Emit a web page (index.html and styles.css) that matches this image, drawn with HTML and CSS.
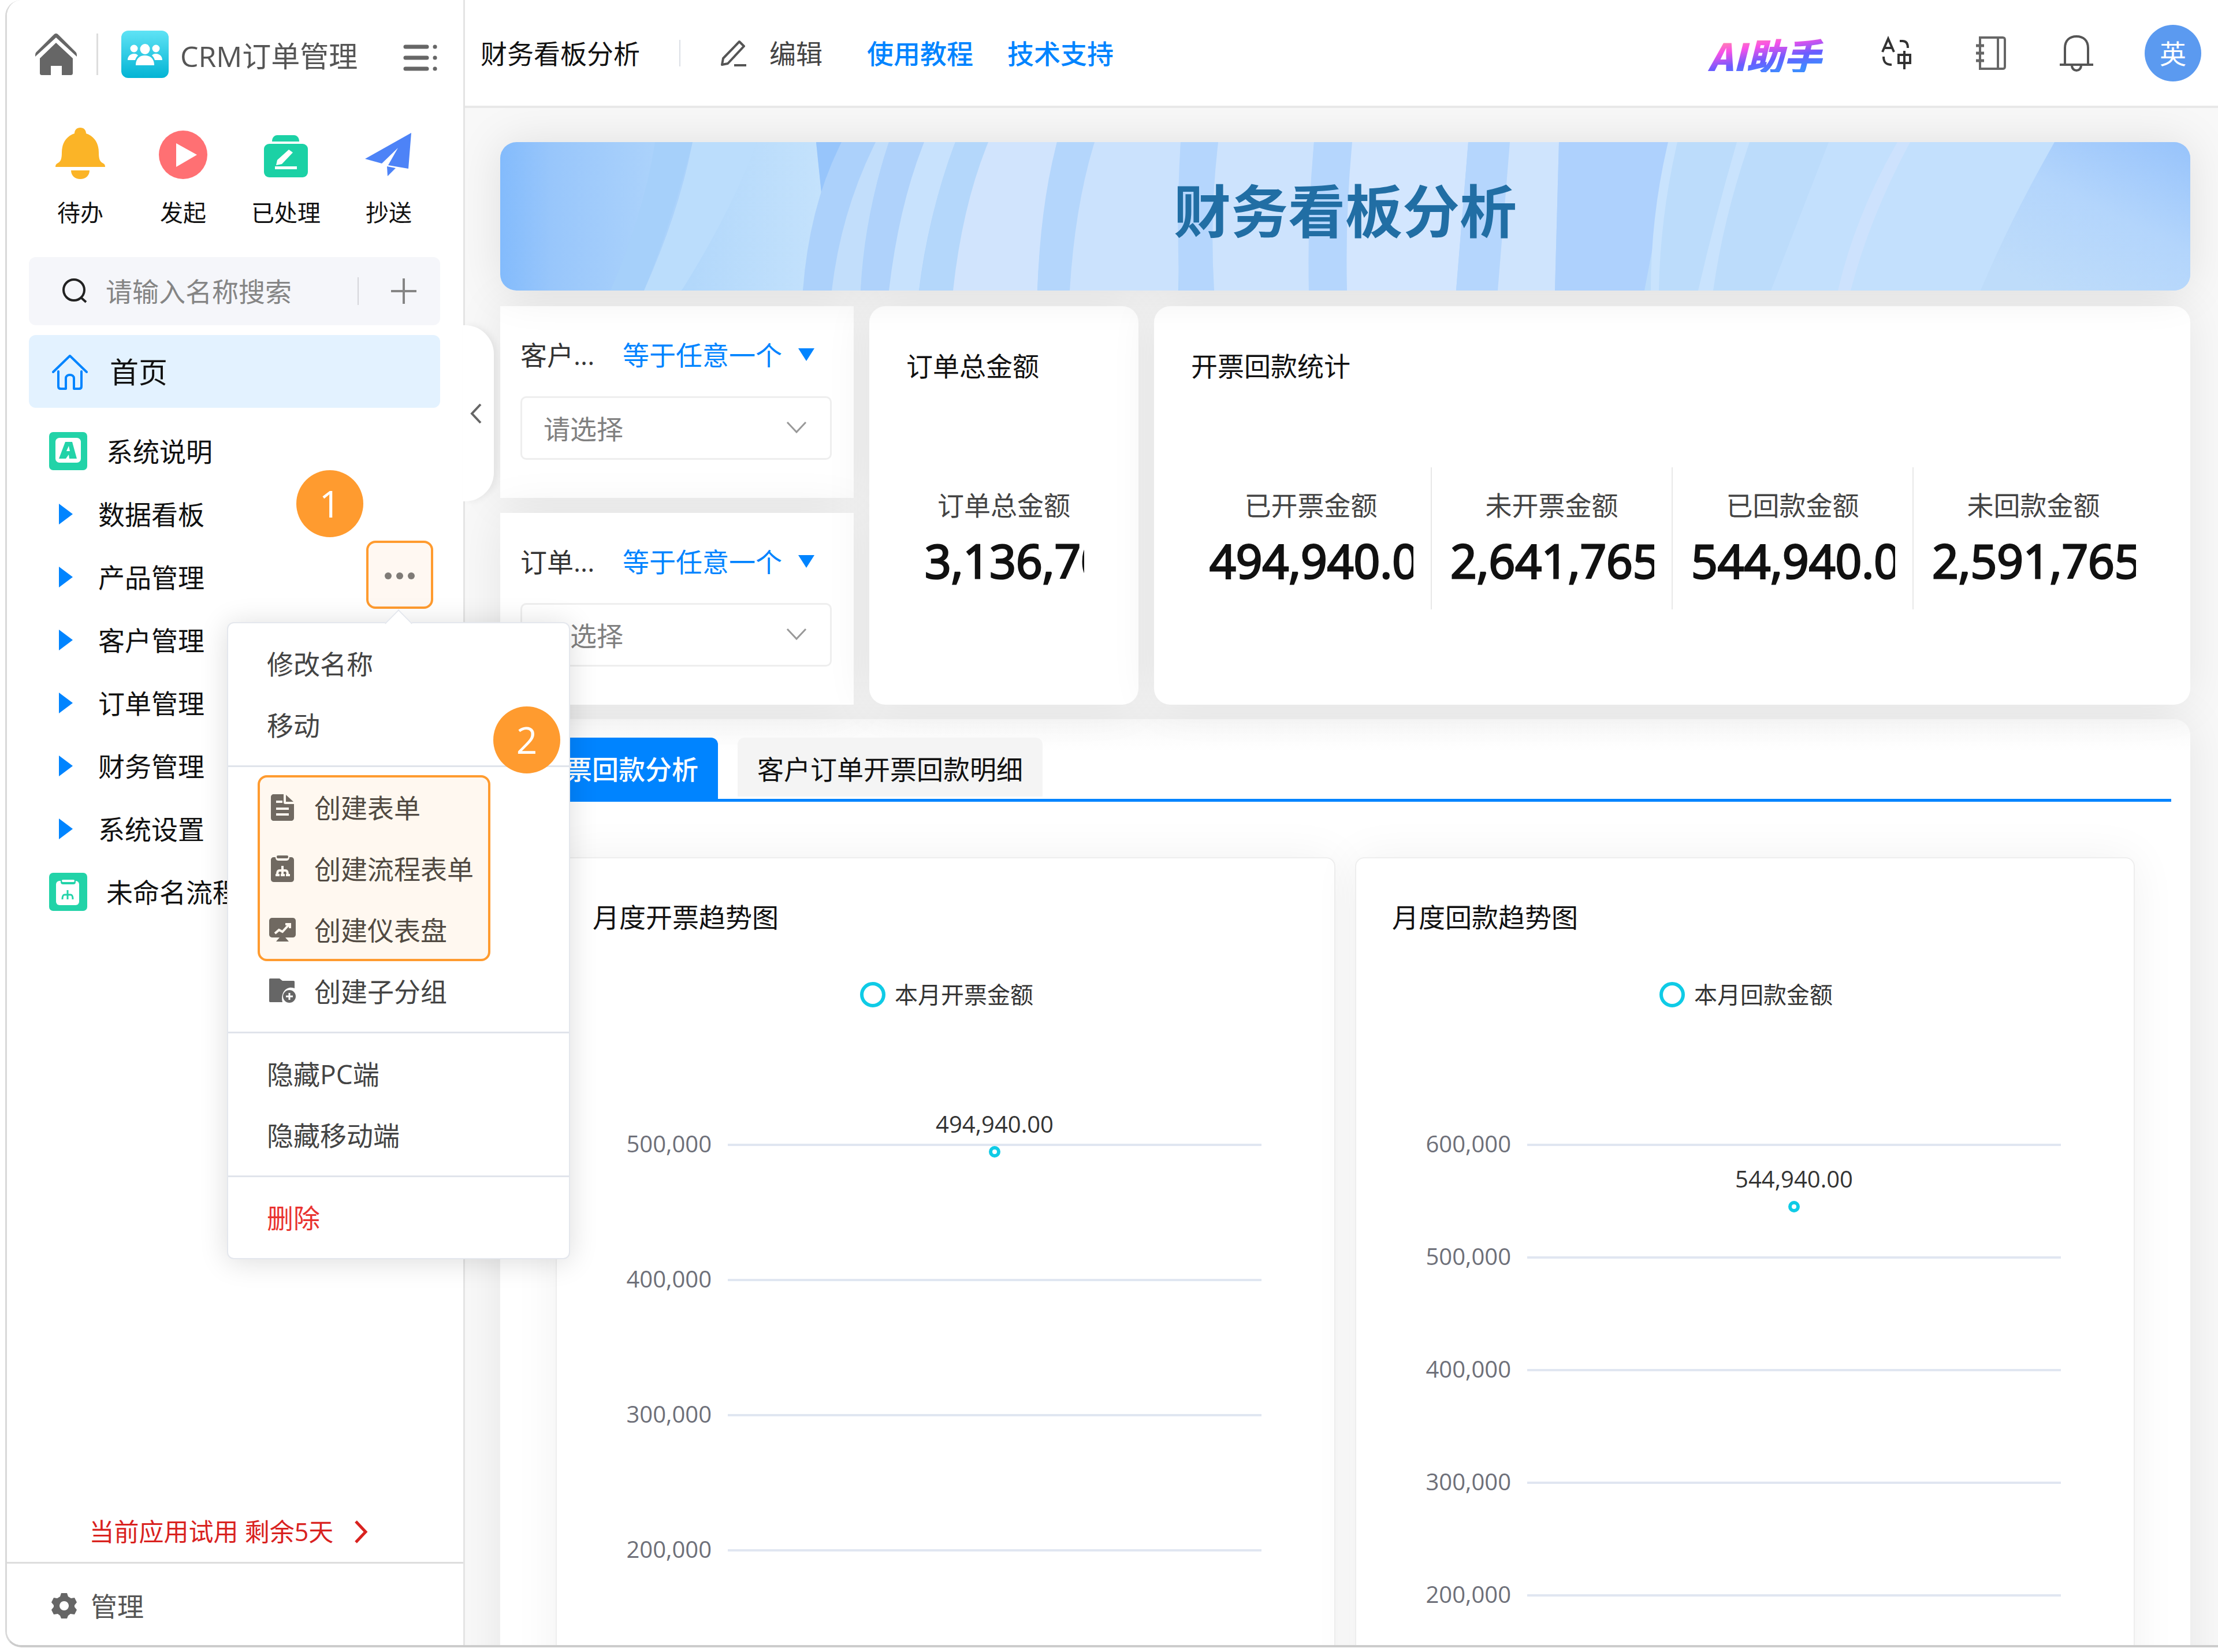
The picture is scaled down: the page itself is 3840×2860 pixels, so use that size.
FILE: index.html
```
<!DOCTYPE html>
<html lang="zh-CN">
<head>
    <meta charset="UTF-8">
    <title>CRM订单管理</title>
    <link rel="stylesheet" href="styles.css">
</head>
<body>
    <div class="app">
        <aside class="sidebar">
            <div class="side-head">
                <a class="home-link" href="#" aria-label="主页">
                    <svg width="72" height="74" viewBox="0 0 72 74" fill="#666">
                        <path d="M36 1c2 0 3 1 5 3l29 29c2 2 2 4 2 8L36 8 0 41c0-4 0-6 2-8L31 4c2-2 3-3 5-3z"/>
                        <path d="M36 17l29 27v25c0 3-1 4-4 4H46V57H27v16H12c-3 0-4-1-4-4V44z"/>
                    </svg>
                </a>
                <span class="side-divider"></span>
                <svg class="app-logo" width="82" height="82" viewBox="0 0 82 82">
                    <defs>
                        <linearGradient id="logo" x1="0" y1="0" x2="0" y2="1">
                            <stop offset="0" stop-color="#5fe3f5"/>
                            <stop offset="1" stop-color="#03b4d4"/>
                        </linearGradient>
                    </defs>
                    <rect width="82" height="82" rx="12" fill="url(#logo)"/>
                    <g fill="#fff">
                        <circle cx="22" cy="31" r="6.500"/>
                        <circle cx="60" cy="31" r="6.500"/>
                        <ellipse cx="41" cy="32" rx="8.500" ry="9"/>
                        <path d="M11 51c0-6 4-11 11-11 4 0 5 1 7 3-3 3-4 5-5 8z"/>
                        <path d="M71 51c0-6-4-11-11-11-4 0-5 1-7 3 3 3 4 5 5 8z"/>
                        <path d="M25 60c0-11 6-17 16-17s16 6 16 17z"/>
                    </g>
                </svg>
                <span class="app-name">CRM订单管理</span>
                <button class="icon-button menu-toggle" aria-label="菜单">
                    <svg width="60" height="46" viewBox="0 0 60 46" stroke="#666" stroke-width="7" stroke-linecap="round">
                        <path d="M4 4h37M4 23h37M4 42h37M55 4h.1M55 23h.1M55 42h.1"/>
                    </svg>
                </button>
            </div>

            <nav class="quick">
                <a href="#">
                    <svg width="90" height="90" viewBox="0 0 90 90" fill="#fbb427">
                        <path d="M45 1c6 0 10 4 10 10 15 5 22 18 22 33 0 12 2 16 8 19 2 1 3 3 3 6H2c0-3 1-5 3-6 6-3 8-7 8-19 0-15 7-28 22-33 0-6 4-10 10-10zM29 75h32c0 9-7 15-16 15s-16-6-16-15z"/>
                    </svg>
                    待办
                </a>
                <a href="#">
                    <svg width="90" height="90" viewBox="0 0 90 90">
                        <circle cx="45" cy="48" r="42" fill="#ff7073"/>
                        <path d="M33 28l36 20-36 21z" fill="#fff"/>
                    </svg>
                    发起
                </a>
                <a href="#">
                    <svg width="90" height="90" viewBox="0 0 90 90">
                        <path d="M21 25c0-7 4-11 9-11h29c5 0 9 4 9 11z" fill="#1bd1a5"/>
                        <rect x="7" y="29" width="76" height="58" rx="9" fill="#1bd1a5"/>
                        <path d="M50 39l7 5-19 20-10 2 2-9zM26 68h38v5H26z" fill="#fff"/>
                    </svg>
                    已处理
                </a>
                <a href="#">
                    <svg width="90" height="90" viewBox="0 0 90 90" fill="#4d83f7">
                        <path d="M84 10L4 55l29 8 28-27-17 30 35 6z"/>
                        <path d="M42 68l15 3-14 14z"/>
                    </svg>
                    抄送
                </a>
            </nav>

            <div class="search">
                <svg width="44" height="44" viewBox="0 0 44 44" fill="none" stroke="#222" stroke-width="4">
                    <circle cx="21" cy="20" r="18"/>
                    <path d="M33 33l9 8"/>
                </svg>
                <input type="text" placeholder="请输入名称搜索" aria-label="请输入名称搜索">
                <span class="search-divider"></span>
                <button class="icon-button" aria-label="新增">
                    <svg width="44" height="44" viewBox="0 0 44 44" stroke="#858585" stroke-width="4">
                        <path d="M0 22h44M22 0v44"/>
                    </svg>
                </button>
            </div>

            <a class="home-row" href="#">
                <svg width="62" height="62" viewBox="0 0 62 62" fill="none" stroke="#0084ff" stroke-width="4" stroke-linecap="round" stroke-linejoin="round">
                    <path d="M2 31L31 3l29 28M11 30v26c0 2 1 4 4 4h9V42c0-4 3-6 7-6s7 2 7 6v18h9c3 0 4-2 4-4V30"/>
                </svg>
                首页
            </a>

            <ul class="tree">
                <li class="tree-row leaf">
                    <svg width="66" height="66" viewBox="0 0 66 66">
                        <rect width="66" height="66" rx="7" fill="#22d3a8"/>
                        <rect x="11" y="10" width="44" height="43" rx="7" fill="#fff"/>
                        <path d="M28 17h12l8 29H35l-1-7-5 7H17z" fill="#22d3a8"/>
                        <path d="M34 24l2 9h-6z" fill="#fff"/>
                    </svg>
                    系统说明
                </li>
                <li class="tree-row"><span class="arrow"></span>数据看板</li>
                <li class="tree-row">
                    <span class="arrow"></span>产品管理
                    <button class="more" aria-label="更多"><i></i><i></i><i></i></button>
                    <div class="menu">
                        <div class="menu-group">
                            <button>修改名称</button>
                            <button>移动</button>
                        </div>
                        <div class="menu-group create">
                            <button>
                                <svg width="46" height="46" viewBox="0 0 46 46" fill="#666">
                                    <path d="M8 0h17v14c0 2 1 3 3 3h15v24c0 3-2 5-5 5H8c-3 0-5-2-5-5V5c0-3 2-5 5-5z"/>
                                    <path d="M29 1l13 12H29z"/>
                                    <path d="M12 13h11M12 25h22M12 35h22" stroke="#fff" stroke-width="4"/>
                                </svg>
                                创建表单
                            </button>
                            <button>
                                <svg width="46" height="46" viewBox="0 0 46 46" fill="#666">
                                    <path d="M8 3h3c0 5 3 6 6 6h12c3 0 6-1 6-6h3c3 0 5 2 5 5v33c0 3-2 5-5 5H8c-3 0-5-2-5-5V8c0-3 2-5 5-5z"/>
                                    <rect x="13" y="0" width="20" height="5" rx="2"/>
                                    <path d="M23 18v17M23 26h-5c-3 0-4 2-4 9M23 26h5c3 0 4 2 4 9" fill="none" stroke="#fff" stroke-width="4"/>
                                    <path d="M11 32h7v4h-7zM20 32h7v4h-7zM29 32h7v4h-7z" fill="#fff"/>
                                </svg>
                                创建流程表单
                            </button>
                            <button>
                                <svg width="46" height="46" viewBox="0 0 46 46" fill="#666">
                                    <rect x="0" y="2" width="46" height="34" rx="5"/>
                                    <path d="M18 36h10l6 7H12z"/>
                                    <path d="M10 29l7-6 6 3 12-13M28 13h8v7" fill="none" stroke="#fff" stroke-width="4"/>
                                </svg>
                                创建仪表盘
                            </button>
                            <button>
                                <svg width="46" height="46" viewBox="0 0 46 46" fill="#666">
                                    <path d="M2 1h16l5 4h19c2 0 2 1 2 3v10c-12-5-25 5-21 24H2c-2 0-2-1-2-3V4c0-2 0-3 2-3z"/>
                                    <circle cx="35" cy="32" r="11"/>
                                    <path d="M29 32h12M35 26v12" stroke="#fff" stroke-width="3"/>
                                </svg>
                                创建子分组
                            </button>
                        </div>
                        <div class="menu-group">
                            <button>隐藏PC端</button>
                            <button>隐藏移动端</button>
                        </div>
                        <div class="menu-group">
                            <button class="danger">删除</button>
                        </div>
                        <span class="mark mark-two">2</span>
                    </div>
                    <span class="mark mark-one">1</span>
                </li>
                <li class="tree-row"><span class="arrow"></span>客户管理</li>
                <li class="tree-row"><span class="arrow"></span>订单管理</li>
                <li class="tree-row"><span class="arrow"></span>财务管理</li>
                <li class="tree-row"><span class="arrow"></span>系统设置</li>
                <li class="tree-row leaf">
                    <svg width="66" height="66" viewBox="0 0 66 66">
                        <rect width="66" height="66" rx="7" fill="#22d3a8"/>
                        <rect x="12" y="14" width="40" height="42" rx="6" fill="#fff"/>
                        <path d="M20 12h26v4c0 3-2 4-4 4H24c-2 0-4-1-4-4z" fill="#22d3a8"/>
                        <rect x="22" y="12" width="22" height="4" rx="2" fill="#fff"/>
                        <path d="M32 30v16M32 38h-5c-3 0-4 2-4 8M32 38h5c3 0 4 2 4 8" fill="none" stroke="#22d3a8" stroke-width="3"/>
                    </svg>
                    未命名流程
                </li>
            </ul>

            <a class="trial" href="#">
                当前应用试用 剩余5天
                <svg width="24" height="40" viewBox="0 0 24 40" fill="none" stroke="#d9221f" stroke-width="5">
                    <path d="M3 2l17 18L3 38"/>
                </svg>
            </a>
            <a class="manage" href="#">
                <svg width="44" height="44" viewBox="0 0 44 44" fill="#666">
                    <path fill-rule="evenodd" d="M17 0h10l2 6 5 3 6-1 4 8-4 5v3l4 5-4 8-7-1-4 3-2 5H17l-2-5-4-3-7 1-4-8 4-5v-3l-4-5 4-8 6 1 5-3zM22 14a8 8 0 1 0 .1 0z"/>
                </svg>
                管理
            </a>
            <button class="collapse" aria-label="收起">
                <svg width="20" height="36" viewBox="0 0 20 36" fill="none" stroke="#666" stroke-width="4">
                    <path d="M18 2L3 18l15 16"/>
                </svg>
            </button>
        </aside>

        <main class="main">
            <header class="topbar">
                <h1 class="page-name">财务看板分析</h1>
                <span class="top-divider"></span>
                <button class="edit">
                    <svg width="46" height="46" viewBox="0 0 46 46" fill="none" stroke="#555" stroke-width="4" stroke-linejoin="round">
                        <path d="M33 3l8 8-28 30-10 2 2-11zM24 44h21"/>
                    </svg>
                    编辑
                </button>
                <a class="top-link" href="#">使用教程</a>
                <a class="top-link" href="#">技术支持</a>
                <div class="top-right">
                    <a class="ai" href="#">AI助手</a>
                    <button class="icon-button translate" aria-label="语言">
                        <svg width="60" height="60" viewBox="0 0 60 60" fill="none" stroke="#333" stroke-width="4">
                            <path d="M4 28L14 5l10 23M8 21h12M34 9h5c6 0 9 4 9 12M6 36c0 10 4 14 14 14M32 33h20v14H32zM42 26v32"/>
                        </svg>
                    </button>
                    <button class="icon-button" aria-label="笔记">
                        <svg width="60" height="60" viewBox="0 0 60 60" fill="none" stroke="#666" stroke-width="4">
                            <path d="M11 3h39c3 0 4 1 4 4v46c0 3-1 4-4 4H11zM42 3v54"/>
                            <path d="M4 17h14M4 30h14M4 43h14" stroke-width="5"/>
                        </svg>
                    </button>
                    <button class="icon-button" aria-label="通知">
                        <svg width="60" height="64" viewBox="0 0 60 64" fill="none" stroke="#555" stroke-width="4">
                            <path d="M10 51V23C10 10 18 3 30 3s20 7 20 20v28M1 52h58M22 53c0 12 16 12 16 0"/>
                        </svg>
                    </button>
                    <span class="avatar">英</span>
                </div>
            </header>

            <div class="board">
                <section class="banner">
                    <svg class="banner-bg" viewBox="0 0 2926 257" preserveAspectRatio="none">
                        <defs>
                            <linearGradient id="base">
                                <stop offset="0" stop-color="#83bbfc"/>
                                <stop offset=".03" stop-color="#98c6fb"/>
                                <stop offset=".09" stop-color="#abd2fb"/>
                                <stop offset="1" stop-color="#b5d7fb"/>
                            </linearGradient>
                            <linearGradient id="fold">
                                <stop offset="0" stop-color="#b1d7fb"/>
                                <stop offset="1" stop-color="#c4e2fc"/>
                            </linearGradient>
                            <linearGradient id="end" x1="1" y1="0" x2=".3" y2="1">
                                <stop offset="0" stop-color="#97c3fb"/>
                                <stop offset=".5" stop-color="#b3d5fc"/>
                                <stop offset="1" stop-color="#bedcfa"/>
                            </linearGradient>
                        </defs>
                        <path fill="url(#base)" d="M0 0h2926v257H0z"/>
                        <path fill="#a6d0fa" d="M268 0h65Q300 130 249 257h-58Q250 120 268 0z"/>
                        <path fill="#bbddfc" d="M333 0h111Q400 150 314 257h-65Q310 120 333 0z"/>
                        <path fill="url(#fold)" d="M444 0h103l9 85-32 172H314Q400 120 444 0z"/>
                        <path fill="#97c5fb" d="M547 0h44l-35 88z"/>
                        <path fill="#acd1fb" d="M591 0h59Q590 130 574 257h-50Q535 110 591 0z"/>
                        <path fill="#c2defb" d="M650 0h23Q630 130 624 257h-50Q590 120 650 0z"/>
                        <path fill="#afd2fb" d="M673 0h61Q685 130 673 257h-49Q635 110 673 0z"/>
                        <path fill="#c8e2fd" d="M734 0h54Q740 130 725 257h-52Q690 110 734 0z"/>
                        <path fill="#b4d7fb" d="M788 0h57Q800 130 784 257h-59Q745 110 788 0z"/>
                        <path fill="#d1e4fd" d="M845 0h119Q935 130 930 257H784Q800 110 845 0z"/>
                        <path fill="#b4d6fc" d="M964 0h65Q995 130 986 257h-56Q935 110 964 0z"/>
                        <path fill="#cbe2fd" d="M1029 0h149l-4 257H986Q995 110 1029 0z"/>
                        <path fill="#b5d6fd" d="M1178 0h65q-15 130-7 257h-60q-6-130 2-257z"/>
                        <path fill="#cde3fd" d="M1243 0h166q-10 130-9 257h-164q-8-130 7-257z"/>
                        <path fill="#b5d6fd" d="M1409 0h66q-12 130-9 257h-66q-3-130 9-257z"/>
                        <path fill="#d3e6fe" d="M1475 0h201l-21 257h-189q-3-130 9-257z"/>
                        <path fill="#b5d6fd" d="M1676 0h72l-21 257h-72z"/>
                        <path fill="#cfe4fd" d="M1748 0h85l-7 257h-99z"/>
                        <path fill="#aed1fd" d="M1833 0h205l-57 257h-155z"/>
                        <path fill="#bcdcfb" d="M2030 0h300l-60 257h-289z"/>
                        <path fill="#c3e0fd" d="M2300 0h391l-128 257h-363z"/>
                        <path fill="#c9e3fd" d="M2022 0h16q-30 130-32 257h-14q0-130 30-257zM2141 0h22q-45 130-63 257h-26q30-130 67-257z"/>
                        <path fill="#cde2fd" d="M2419 0h22q-70 130-103 257h-22q30-130 103-257z"/>
                        <path fill="url(#end)" d="M2691 0h235v257h-363q50-120 128-257z"/>
                    </svg>
                    <h2>财务看板分析</h2>
                </section>

                <div class="cards">
                    <div class="filters">
                        <div class="filter">
                            <div class="filter-head">
                                <label for="customer">客户...</label>
                                <button class="operator">等于任意一个<span class="caret"></span></button>
                            </div>
                            <div class="select">
                                <select id="customer"><option>请选择</option></select>
                                <svg width="36" height="22" viewBox="0 0 36 22" fill="none" stroke="#999" stroke-width="3"><path d="M2 2l16 17L34 2"/></svg>
                            </div>
                        </div>
                        <div class="filter">
                            <div class="filter-head">
                                <label for="order">订单...</label>
                                <button class="operator">等于任意一个<span class="caret"></span></button>
                            </div>
                            <div class="select">
                                <select id="order"><option>请选择</option></select>
                                <svg width="36" height="22" viewBox="0 0 36 22" fill="none" stroke="#999" stroke-width="3"><path d="M2 2l16 17L34 2"/></svg>
                            </div>
                        </div>
                    </div>
                    <section class="card">
                        <h3>订单总金额</h3>
                        <div class="stats">
                            <div class="stat">
                                <div class="stat-label">订单总金额</div>
                                <div class="stat-value">3,136,705.00</div>
                            </div>
                        </div>
                    </section>
                    <section class="card">
                        <h3>开票回款统计</h3>
                        <div class="stats">
                            <div class="stat">
                                <div class="stat-label">已开票金额</div>
                                <div class="stat-value">494,940.00</div>
                            </div>
                            <div class="stat">
                                <div class="stat-label">未开票金额</div>
                                <div class="stat-value">2,641,765.00</div>
                            </div>
                            <div class="stat">
                                <div class="stat-label">已回款金额</div>
                                <div class="stat-value">544,940.00</div>
                            </div>
                            <div class="stat">
                                <div class="stat-label">未回款金额</div>
                                <div class="stat-value">2,591,765.00</div>
                            </div>
                        </div>
                    </section>
                </div>

                <section class="tab-card">
                    <div class="tabs">
                        <button class="tab active">开票回款分析</button>
                        <button class="tab">客户订单开票回款明细</button>
                    </div>
                    <div class="panels">
                        <section class="panel">
                            <h3>月度开票趋势图</h3>
                            <div class="legend"><span class="ring"></span>本月开票金额</div>
                            <div class="chart">
                                <div class="axis-row">
                                    <span>500,000</span>
                                    <div class="line">
                                        <div class="point" style="top: 12px"><b>494,940.00</b></div>
                                    </div>
                                </div>
                                <div class="axis-row"><span>400,000</span><div class="line"></div></div>
                                <div class="axis-row"><span>300,000</span><div class="line"></div></div>
                                <div class="axis-row"><span>200,000</span><div class="line"></div></div>
                            </div>
                        </section>
                        <section class="panel">
                            <h3>月度回款趋势图</h3>
                            <div class="legend"><span class="ring"></span>本月回款金额</div>
                            <div class="chart dense">
                                <div class="axis-row">
                                    <span>600,000</span>
                                    <div class="line">
                                        <div class="point" style="top: 107px"><b>544,940.00</b></div>
                                    </div>
                                </div>
                                <div class="axis-row"><span>500,000</span><div class="line"></div></div>
                                <div class="axis-row"><span>400,000</span><div class="line"></div></div>
                                <div class="axis-row"><span>300,000</span><div class="line"></div></div>
                                <div class="axis-row"><span>200,000</span><div class="line"></div></div>
                            </div>
                        </section>
                    </div>
                </section>
            </div>
        </main>
    </div>
</body>
</html>
```
FILE: styles.css
```
* {
    box-sizing: border-box;
}
body {
    margin: 0;
    background: #fff;
    color: #111;
    font-family: "Open Sans", "Noto Sans CJK SC", sans-serif;
    font-size: 46px;
    line-height: 60px;
}
button, input, select {
    font: inherit;
    color: inherit;
    border: none;
    background: none;
    padding: 0;
    margin: 0;
}
button {
    cursor: pointer;
}
a {
    color: inherit;
    text-decoration: none;
}
h1, h2, h3, ul {
    margin: 0;
    padding: 0;
    font-size: inherit;
    font-weight: normal;
}
svg {
    display: block;
    flex: none;
}
.icon-button {
    display: flex;
    justify-content: center;
    align-items: center;
}
.app {
    display: flex;
    height: calc(100vh - 8px);
    margin-left: 9px;
    border-left: 3px solid #d9d9d9;
    border-bottom: 4px solid #ccc;
    border-radius: 28px 0 0 28px;
    overflow: hidden;
}

/* sidebar */
.sidebar {
    position: relative;
    z-index: 2;
    flex: none;
    display: flex;
    flex-direction: column;
    width: 793px;
    padding: 0 40px 0 38px;
    border-right: 3px solid #e4e4e4;
    background: #fff;
}
.side-head {
    display: flex;
    align-items: center;
    height: 188px;
    padding: 0 4px 0 11px;
}
.side-divider {
    width: 3px;
    height: 72px;
    margin: 0 40px 0 34px;
    background: #ddd;
}
.app-name {
    margin-left: 20px;
    padding-top: 6px;
    font-size: 50px;
    color: #555;
}
.menu-toggle {
    margin-left: auto;
    padding-top: 12px;
}
.quick {
    display: grid;
    grid-template-columns: repeat(4, 1fr);
    padding-top: 32px;
    font-size: 40px;
}
.quick a {
    display: flex;
    flex-direction: column;
    align-items: center;
    gap: 28px;
}
.search {
    display: flex;
    align-items: center;
    height: 118px;
    margin-top: 47px;
    padding: 0 41px 0 57px;
    border-radius: 12px;
    background: #f5f6fa;
}
.search input {
    flex: 1;
    min-width: 0;
    margin-left: 32px;
    outline: none;
}
.search input::placeholder {
    color: #858585;
    opacity: 1;
}
.search-divider {
    width: 2px;
    height: 48px;
    margin-right: 56px;
    background: #d5d5da;
}
.home-row {
    display: flex;
    align-items: center;
    gap: 38px;
    height: 126px;
    margin-top: 17px;
    padding: 2px 0 0 40px;
    border-radius: 12px;
    background: #e3f2ff;
    font-size: 50px;
}
.tree {
    flex: 1;
    margin-top: 20px;
    list-style: none;
}
.tree-row {
    position: relative;
    display: flex;
    align-items: center;
    height: 109px;
    padding-left: 52px;
    white-space: nowrap;
}
.tree-row.leaf {
    gap: 33px;
    padding-left: 35px;
}
.arrow {
    margin-right: 44px;
    border-left: 24px solid #0084ff;
    border-top: 18px solid transparent;
    border-bottom: 18px solid transparent;
}
.more {
    position: absolute;
    top: -8px;
    right: 12px;
    display: flex;
    justify-content: center;
    align-items: center;
    gap: 8px;
    width: 116px;
    height: 118px;
    padding-top: 4px;
    border: 4px solid #ff9b2f;
    border-radius: 16px;
    background: #fff8f2;
}
.more i {
    width: 12px;
    height: 12px;
    border-radius: 50%;
    background: #7f7b77;
}
.trial {
    display: flex;
    justify-content: center;
    align-items: center;
    gap: 36px;
    height: 104px;
    padding-right: 20px;
    font-size: 43px;
    color: #d9221f;
}
.manage {
    display: flex;
    align-items: center;
    gap: 24px;
    height: 144px;
    margin: 0 -40px 0 -38px;
    padding: 4px 0 0 77px;
    border-top: 3px solid #ddd;
    color: #555;
}
.collapse {
    position: absolute;
    top: 563px;
    left: 100%;
    display: flex;
    align-items: center;
    width: 53px;
    height: 305px;
    padding-left: 12px;
    border-radius: 0 50px 50px 0;
    background: #fff;
    box-shadow: 6px 0 12px rgba(0, 0, 0, .06);
}

/* popup menu */
.menu {
    position: absolute;
    z-index: 5;
    top: 133px;
    left: 343px;
    width: 594px;
    border: 2px solid #e4e7ed;
    border-radius: 12px;
    background: #fff;
    box-shadow: 0 4px 50px rgba(0, 0, 0, .14);
    color: #444;
}
.menu::before {
    content: "";
    position: absolute;
    top: -17px;
    left: 278px;
    width: 32px;
    height: 32px;
    border: 2px solid #e4e7ed;
    border-right: none;
    border-bottom: none;
    background: #fff;
    transform: rotate(45deg);
}
.menu-group {
    position: relative;
    padding: 17px 0;
}
.menu-group + .menu-group {
    border-top: 3px solid #e0e4eb;
}
.menu-group button {
    display: flex;
    align-items: center;
    gap: 32px;
    width: 100%;
    height: 106px;
    padding-left: 67px;
}
.menu-group.create button {
    padding-left: 71px;
}
.create::after {
    content: "";
    position: absolute;
    top: 14px;
    right: 136px;
    left: 51px;
    height: 314px;
    border: 4px solid #ff9b2f;
    border-radius: 16px;
    background: rgba(255, 155, 47, .07);
}
.menu-group .danger {
    color: #e93330;
}
.mark {
    position: absolute;
    width: 116px;
    height: 116px;
    border-radius: 50%;
    background: #ff9b2f;
    color: #fff;
    font-size: 64px;
    line-height: 116px;
    text-align: center;
}
.mark-one {
    top: -130px;
    left: 463px;
}
.mark-two {
    top: 144px;
    right: 15px;
}

/* top bar */
.main {
    flex: 1;
    display: flex;
    flex-direction: column;
    min-width: 0;
}
.topbar {
    flex: none;
    display: flex;
    align-items: center;
    height: 187px;
    padding: 0 29px 0 27px;
    border-bottom: 4px solid #e8e8e8;
    background: #fff;
}
.top-divider {
    width: 2px;
    height: 46px;
    margin: 0 69px 0 68px;
    background: #dcdfe6;
}
.edit {
    display: flex;
    align-items: center;
    gap: 39px;
    margin-right: 18px;
    color: #444;
}
.top-link {
    margin-left: 59px;
    color: #0084ff;
    font-weight: 500;
}
.top-right {
    display: flex;
    align-items: center;
    gap: 88px;
    margin-left: auto;
}
.ai {
    padding: 6px 14px 0 6px;
    background: linear-gradient(170deg, #ff7ab8 22%, #f850e8 36%, #6a5cff 62%, #3f8bff 85%);
    background-clip: text;
    -webkit-background-clip: text;
    color: transparent;
    font-family: "Noto Sans CJK SC", sans-serif;
    font-size: 65px;
    font-style: italic;
    font-weight: 900;
}
.translate {
    margin-right: 14px;
}
.avatar {
    width: 98px;
    height: 98px;
    border-radius: 50%;
    background: #5b9af0;
    color: #fff;
    line-height: 98px;
    text-align: center;
}

/* board */
.board {
    flex: 1;
    min-height: 0;
    padding: 59px 48px 0 61px;
    overflow: hidden;
    background: #f8f8f8;
}
.banner {
    position: relative;
    height: 257px;
    border-radius: 28px;
    box-shadow: 0 0 80px rgba(0, 0, 0, .1);
}
.banner-bg {
    width: 100%;
    height: 100%;
    border-radius: 28px;
}
.banner h2 {
    position: absolute;
    inset: 0 0 20px;
    color: #216ea4;
    font-size: 99px;
    font-weight: bold;
    line-height: 237px;
    text-align: center;
}
.cards {
    display: grid;
    grid-template-columns: minmax(0, 612fr) minmax(0, 466fr) minmax(0, 1794fr);
    gap: 27px;
    margin-top: 27px;
}
.filters {
    display: flex;
    flex-direction: column;
    gap: 26px;
}
.filter {
    flex: 1;
    padding: 54px 38px 0 35px;
    background: #fff;
    box-shadow: 0 0 80px rgba(0, 0, 0, .08);
}
.filter-head {
    display: flex;
    justify-content: space-between;
    padding-right: 30px;
    color: #333;
    white-space: nowrap;
}
.operator {
    display: flex;
    align-items: center;
    gap: 28px;
    color: #0084ff;
}
.caret {
    border-top: 22px solid #0084ff;
    border-left: 14px solid transparent;
    border-right: 14px solid transparent;
}
.select {
    position: relative;
    margin-top: 42px;
}
.select select {
    appearance: none;
    width: 100%;
    height: 110px;
    padding: 2px 0 0 37px;
    border: 3px solid #eee;
    border-radius: 10px;
    color: #808080;
}
.select svg {
    position: absolute;
    top: 43px;
    right: 43px;
    pointer-events: none;
}
.card {
    padding: 73px 64px 165px;
    border-radius: 28px;
    background: #fff;
    box-shadow: 0 0 80px rgba(0, 0, 0, .08);
}
.stats {
    display: flex;
    margin-top: 146px;
}
.stat {
    flex: 1;
    min-width: 0;
    height: 246px;
    padding: 35px 30px 0;
}
.stat + .stat {
    border-left: 2px solid #e8e8e8;
}
.stat-label {
    color: #444;
    text-align: center;
    white-space: nowrap;
}
.stat-value {
    margin-top: 18px;
    padding-left: 2px;
    overflow: hidden;
    font-size: 80px;
    line-height: 96px;
    white-space: nowrap;
    -webkit-text-stroke: 3px #111;
}
.tab-card {
    height: 1700px;
    margin-top: 25px;
    padding: 32px 33px 0;
    border-radius: 28px;
    background: linear-gradient(#f8f8f8, #fff 56px);
    box-shadow: 0 0 80px rgba(0, 0, 0, .08);
}
.tabs {
    display: flex;
    align-items: flex-start;
    gap: 34px;
    height: 111px;
    border-bottom: 5px solid #0084ff;
}
.tab {
    height: 102px;
    padding: 0 34px;
    border-radius: 12px 12px 0 0;
    background: #f4f4f4;
    line-height: 108px;
}
.tab.active {
    height: 106px;
    background: #0084ff;
    color: #fff;
    font-weight: 500;
}
.panels {
    display: grid;
    grid-template-columns: 1fr 1fr;
    gap: 34px;
    height: 100%;
    margin-top: 96px;
    padding: 0 63px;
}
.panel {
    padding: 71px 0 0 62px;
    border: 2px solid #eee;
    border-radius: 16px;
    background: #fff;
    box-shadow: 0 0 80px rgba(0, 0, 0, .06);
}
.legend {
    display: flex;
    justify-content: center;
    align-items: center;
    gap: 16px;
    margin-top: 75px;
    padding-right: 58px;
    color: #333;
    font-size: 40px;
}
.ring {
    width: 44px;
    height: 44px;
    border: 6px solid #0fcbe6;
    border-radius: 50%;
}
.chart {
    padding: 228px 126px 0 0;
}
.axis-row {
    display: flex;
    align-items: center;
    gap: 28px;
    height: 4px;
    margin-bottom: 230px;
}
.dense .axis-row {
    margin-bottom: 191px;
}
.axis-row span {
    width: 206px;
    padding-bottom: 4px;
    color: #6e7079;
    font-size: 40px;
    text-align: right;
}
.line {
    position: relative;
    flex: 1;
    height: 4px;
    background: #e0e6f1;
}
.point {
    position: absolute;
    left: 50%;
    width: 20px;
    height: 20px;
    margin: -8px 0 0 -10px;
    border: 6px solid #0fcbe6;
    border-radius: 50%;
    background: #fff;
}
.point b {
    position: absolute;
    bottom: 22px;
    left: 50%;
    color: #333;
    font-size: 40px;
    font-weight: normal;
    transform: translateX(-50%);
}
```
